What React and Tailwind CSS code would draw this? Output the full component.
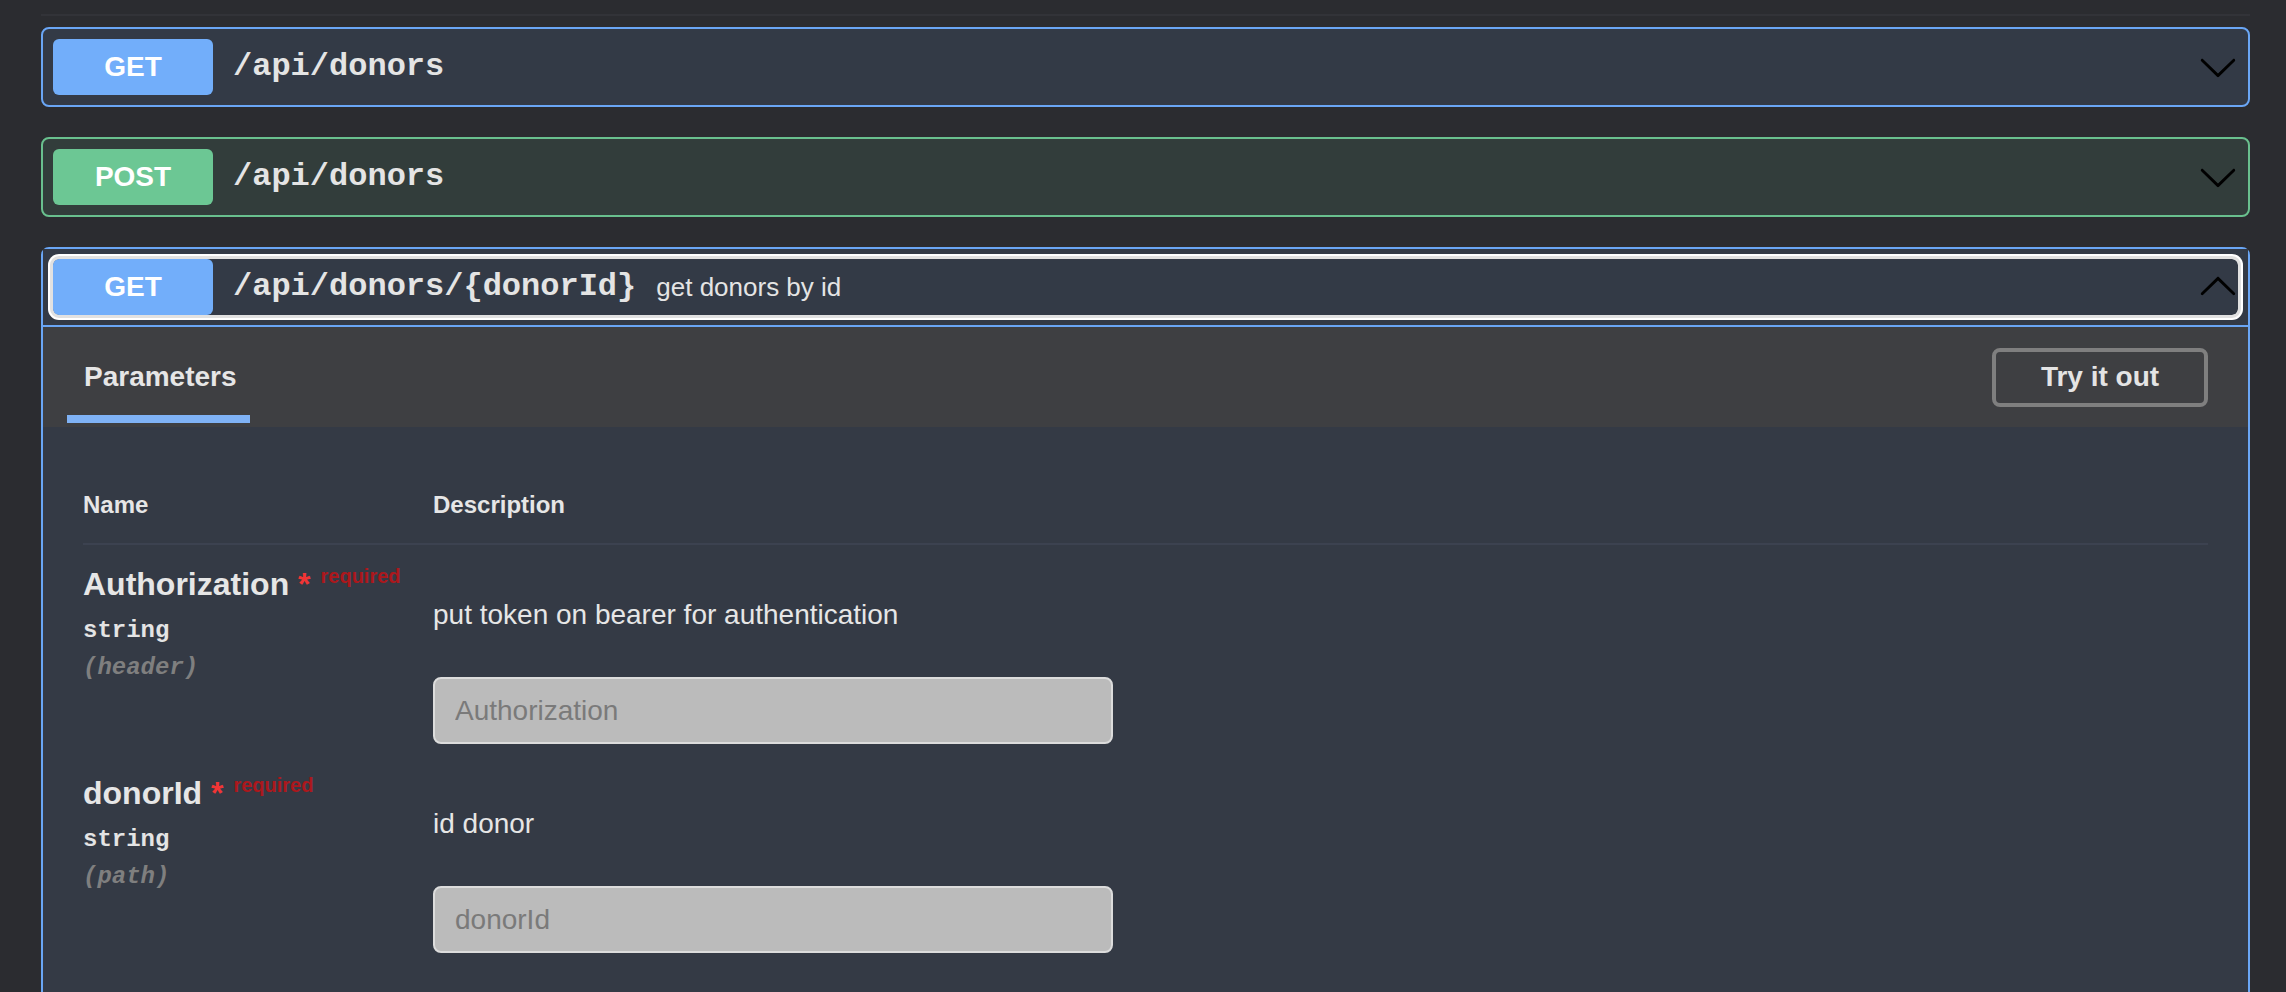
import React from 'react'

const chevronPath =
  'M17.418 6.109c.272-.268.709-.268.979 0s.271.701 0 .969l-7.908 7.83c-.27.268-.707.268-.979 0l-7.908-7.83c-.27-.268-.27-.701 0-.969.271-.268.709-.268.979 0L10 13.25l7.418-7.141z'

function Chevron({ up }) {
  return (
    <svg
      viewBox="0 0 20 20"
      fill="#000"
      className={up ? 'ml-auto h-[40px] w-[40px] shrink-0 rotate-180' : 'ml-auto h-[40px] w-[40px] shrink-0'}
    >
      <path d={chevronPath} />
    </svg>
  )
}

function Method({ label, className }) {
  return (
    <div
      className={`flex h-[56px] w-[160px] shrink-0 items-center justify-center rounded-[6px] text-[28px] font-bold text-white ${className}`}
    >
      {label}
    </div>
  )
}

function Path({ children }) {
  return (
    <span className="px-[20px] font-['Liberation_Mono',monospace] text-[32px] font-bold text-[#e4e4e4] whitespace-nowrap">
      {children}
    </span>
  )
}

function Collapsed({ method, path, border, bg, badge }) {
  return (
    <div className={`rounded-[8px] border-2 ${border} ${bg}`}>
      <div className="flex items-center p-[10px]">
        <Method label={method} className={badge} />
        <Path>{path}</Path>
        <Chevron />
      </div>
    </div>
  )
}

function ParamRow({ name, type, where, description, placeholder }) {
  return (
    <div className="flex pt-[21px] pb-[10px]">
      <div className="w-[350px] shrink-0">
        <div className="text-[32px] leading-[37px] font-bold text-[#e6e6e6] whitespace-nowrap">
          {name}
          <span className="text-[#f03535]">&nbsp;*</span>
          <span className="relative -top-[12px] pl-[10px] text-[20px] text-[rgba(255,0,0,0.6)]">required</span>
        </div>
        <div className="pt-[10px] font-['Liberation_Mono',monospace] text-[24px] leading-[27px] font-bold text-[#e4e4e4]">
          {type}
        </div>
        <div className="pt-[10px] font-['Liberation_Mono',monospace] text-[24px] leading-[27px] font-bold italic text-[#7f7f7f]">
          ({where})
        </div>
      </div>
      <div className="flex flex-col">
        <p className="mt-[33px] text-[28px] leading-[32px] text-[#e6e6e6]">{description}</p>
        <input
          placeholder={placeholder}
          className="mt-[46px] h-[67px] w-[680px] rounded-[8px] border-2 border-[#dcdcdc] bg-[#bbbbbb] px-[20px] text-[28px] text-[#333] placeholder:text-[#7a7a7a] outline-none"
        />
      </div>
    </div>
  )
}

export default function App() {
  return (
    <div className="h-[992px] overflow-hidden bg-[#2b2c30] pl-[41px] pr-[36px] pt-[14px] font-['Liberation_Sans',Arial,sans-serif]">
      <div className="h-[2px] bg-[#323338]" />
      <div className="mt-[11px] flex flex-col gap-[30px]">
        <Collapsed
          method="GET"
          path="/api/donors"
          border="border-[#6aa6f5]"
          bg="bg-[#333a46]"
          badge="bg-[#72aefa]"
        />
        <Collapsed
          method="POST"
          path="/api/donors"
          border="border-[#69c08e]"
          bg="bg-[#323d3b]"
          badge="bg-[#6cc794]"
        />

        <div className="rounded-[8px] border-2 border-[#6aa6f5] bg-[#343a45]">
          <div className="border-b-2 border-[#6aa6f5] bg-[#333a46] p-[10px]">
            <div className="flex items-center rounded-[6px] outline-3 outline-solid outline-[#e1e1e1] shadow-[0_0_0_5px_#ffffff]">
              <Method label="GET" className="bg-[#72aefa]" />
              <Path>/api/donors/&#123;donorId&#125;</Path>
              <span className="text-[26px] text-[#e4e4e4] whitespace-nowrap">get donors by id</span>
              <Chevron up />
            </div>
          </div>

          <div className="flex h-[100px] items-center justify-between bg-[#3e3f42] pr-[40px] pl-[24px]">
            <div className="relative flex h-full w-[183px] items-center pl-[17px]">
              <span className="text-[28px] font-bold text-[#e6e6e6]">Parameters</span>
              <div className="absolute bottom-[4px] left-0 h-[8px] w-full bg-[#7fb2f5]" />
            </div>
            <button className="h-[59px] w-[216px] rounded-[8px] border-4 border-[#7f7f7f] text-[28px] font-bold text-[#e4e4e4]">
              Try it out
            </button>
          </div>

          <div className="px-[40px] pt-[64px] pb-[80px]">
            <div className="flex border-b-2 border-[#3c4250] pb-[24px] text-[24px] leading-[28px] font-bold text-[#e6e6e6]">
              <div className="w-[350px]">Name</div>
              <div>Description</div>
            </div>
            <ParamRow
              name="Authorization"
              type="string"
              where="header"
              description="put token on bearer for authentication"
              placeholder="Authorization"
            />
            <ParamRow
              name="donorId"
              type="string"
              where="path"
              description="id donor"
              placeholder="donorId"
            />
          </div>
        </div>
      </div>
    </div>
  )
}
